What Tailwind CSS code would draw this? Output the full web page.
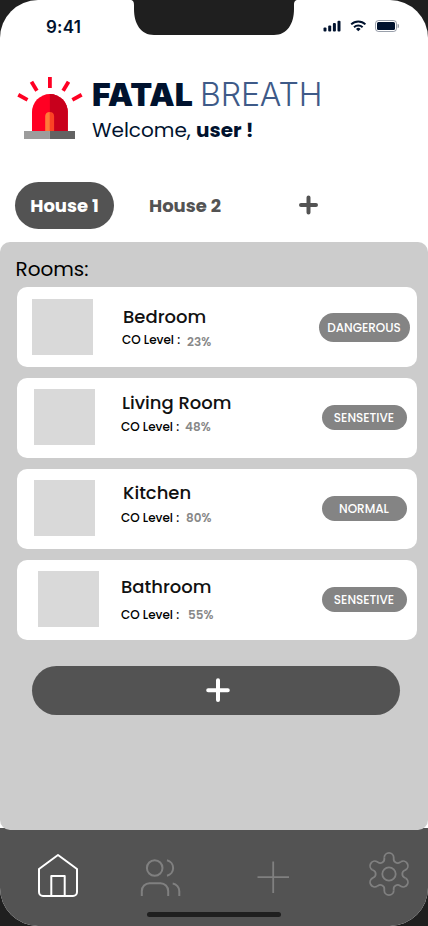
<!DOCTYPE html>
<html lang="en">
<head>
<meta charset="utf-8">
<title>Fatal Breath</title>
<script src="https://cdn.jsdelivr.net/npm/@tailwindcss/browser@4"></script>
</head>
<body class="bg-[#1f1f1f]">
<div class="relative w-[428px] h-[926px] bg-white rounded-[38px] overflow-hidden flex flex-col font-['Poppins','Inter',sans-serif] whitespace-nowrap">
  <svg class="absolute left-[130px] top-0" width="168" height="35" viewBox="0 0 168 35" fill="#1f1f1f"><path d="M0 0C3 0 4 1.500 4 5V9C4 24 11 35 24 35H144C157 35 164 24 164 9V5C164 1.500 165 0 168 0Z"/></svg>
  <header class="h-[44px] shrink-0 flex items-start justify-between pl-[46px] pr-[29px]">
    <span class="mt-[15px] text-[17px] leading-[24px] font-semibold text-[#00122e] font-['Inter'] tracking-[0.2px]">9:41</span>
    <div class="flex items-start mt-[20px] text-[#00122e]">
      <svg width="18" height="12" viewBox="0 0 18 12" fill="currentColor"><rect x="0.500" y="7.500" width="3" height="4" rx="1"/><rect x="5.200" y="5.500" width="3" height="6" rx="1"/><rect x="9.900" y="3" width="3" height="8.500" rx="1"/><rect x="14.500" y="0.700" width="3" height="10.800" rx="1"/></svg>
      <svg class="ml-[9px]" width="17" height="12" viewBox="0 0 17 12" fill="none" stroke="currentColor" stroke-width="2"><path d="M1.200 4.400a10.300 10.300 0 0 1 14.200 0M4 7.300a6.300 6.300 0 0 1 8.600 0"/><path d="M8.300 11.200L6 8.900a3.300 3.300 0 0 1 4.600 0Z" fill="currentColor" stroke="none"/></svg>
      <svg class="ml-[8px]" width="24" height="12" viewBox="0 0 24 12"><rect x=".5" y=".5" width="21" height="11" rx="3" fill="none" stroke="currentColor" stroke-opacity=".4"/><rect x="2" y="2" width="18" height="8" rx="1.500" fill="currentColor"/><path d="M22.600 4v4a2 2 0 0 0 0-4Z" fill="currentColor" opacity=".4"/></svg>
    </div>
  </header>

  <section class="h-[138px] shrink-0 flex pl-[17px] pt-[32px]">
    <svg width="66" height="64" viewBox="0 0 66 64"><g fill="#ff0023"><rect x="31" y="1" width="3.800" height="11"/><rect x="-1.900" y="-5.500" width="3.800" height="10.500" transform="translate(17.300 10.500) rotate(-31)"/><rect x="-1.900" y="-5.500" width="3.800" height="10.500" transform="translate(48.700 10.500) rotate(31)"/><rect x="-1.900" y="-5.300" width="3.800" height="10.600" transform="translate(5.900 21.300) rotate(-61)"/><rect x="-1.900" y="-5.300" width="3.800" height="10.600" transform="translate(60 21.300) rotate(61)"/><path d="M15 55V36a17.900 17.900 0 0 1 35.800 0V55Z"/></g><path d="M32.900 18.100A17.900 17.900 0 0 1 50.800 36V55H32.900Z" fill="#c8001c"/><path d="M28.200 55V40a4.700 4.300 0 0 1 4.700-4V55Z" fill="#ff7a39"/><path d="M32.900 36a4.400 4.300 0 0 1 4.200 4V55H32.900Z" fill="#fb4324"/><path d="M7 55H32.900V63H7Z" fill="#9c9c9c"/><path d="M32.900 55H58V63H32.900Z" fill="#636363"/></svg>
    <div class="ml-[9px]">
      <h1 class="text-[32px] leading-[38px] text-[#00122e] font-['Inter'] flex"><span class="font-black w-[101px]">FATAL</span><span class="font-light text-[#3e5a88] ml-[7px] tracking-[-0.1px]">BREATH</span></h1>
      <p class="text-[20px] leading-[30px] text-[#00122e] mt-[1px]">Welcome, <b>user !</b></p>
    </div>
  </section>

  <nav class="h-[60px] shrink-0 flex items-start pl-[15px] text-[18px] font-bold text-[#535353]">
    <div class="w-[99px] h-[47px] rounded-full bg-[#535353] text-white flex items-center justify-center">House 1</div>
    <div class="h-[47px] flex items-center ml-[35px] w-[150px]">House 2</div>
    <svg class="mt-[13px]" width="20" height="20" viewBox="0 0 20 20" stroke="currentColor" stroke-width="4" stroke-linecap="round"><path d="M9.500 2.500v15M2 10h15"/></svg>
  </nav>

  <main class="relative z-10 h-[588px] shrink-0 bg-[#ccc] rounded-[10px] px-[17px] pt-[12px] flex flex-col">
    <h2 class="-ml-[1.5px] text-[20px] leading-[30px] h-[33px] shrink-0 text-black">Rooms:</h2>
    <div class="flex flex-col gap-[11px] text-[#111] shrink-0">
      <article class="h-[80px] w-[400px] rounded-[10px] bg-white flex items-start">
        <div class="ml-[15px] mt-[12px] w-[61px] h-[56px] bg-[#d9d9d9]"></div>
        <div class="ml-[30px] pt-[18px]">
          <h3 class="text-[18px] leading-[24px] font-medium">Bedroom</h3>
          <p class="-ml-[1px] mt-[3px] text-[12px] leading-[16px] flex font-medium text-black"><span>CO Level :</span><span class="ml-[7px] mt-[2px] font-semibold text-[#888]">23%</span></p>
        </div>
        <div class="ml-auto mr-[7px] mt-[26px] w-[91px] h-[29px] rounded-full bg-[#848484] text-white text-[12px] font-medium flex items-center justify-center pr-[1px]">DANGEROUS</div>
      </article>
      <article class="h-[80px] w-[400px] rounded-[10px] bg-white flex items-start">
        <div class="ml-[17px] mt-[11px] w-[61px] h-[56px] bg-[#d9d9d9]"></div>
        <div class="ml-[26px] pt-[13px]">
          <h3 class="ml-[1px] text-[18px] leading-[24px] font-medium">Living Room</h3>
          <p class="mt-[4px] text-[12px] leading-[16px] flex font-medium text-black"><span>CO Level :</span><span class="ml-[6px] font-semibold text-[#888]">48%</span></p>
        </div>
        <div class="ml-auto mr-[10px] mt-[27px] w-[85px] h-[25px] rounded-full bg-[#848484] text-white text-[12px] font-medium flex items-center justify-center pr-[1px]">SENSETIVE</div>
      </article>
      <article class="h-[80px] w-[400px] rounded-[10px] bg-white flex items-start">
        <div class="ml-[17px] mt-[11px] w-[61px] h-[56px] bg-[#d9d9d9]"></div>
        <div class="ml-[26px] pt-[12px]">
          <h3 class="ml-[2px] text-[18px] leading-[24px] font-medium">Kitchen</h3>
          <p class="mt-[5px] text-[12px] leading-[16px] flex font-medium text-black"><span>CO Level :</span><span class="ml-[7px] font-semibold text-[#888]">80%</span></p>
        </div>
        <div class="ml-auto mr-[10px] mt-[27px] w-[85px] h-[25px] rounded-full bg-[#848484] text-white text-[12px] font-medium flex items-center justify-center pr-[1px]">NORMAL</div>
      </article>
      <article class="h-[80px] w-[400px] rounded-[10px] bg-white flex items-start">
        <div class="ml-[21px] mt-[11px] w-[61px] h-[56px] bg-[#d9d9d9]"></div>
        <div class="ml-[22px] pt-[15px]">
          <h3 class="text-[18px] leading-[24px] font-medium">Bathroom</h3>
          <p class="mt-[8px] text-[12px] leading-[16px] flex font-medium text-black"><span>CO Level :</span><span class="ml-[9px] font-semibold text-[#888]">55%</span></p>
        </div>
        <div class="ml-auto mr-[10px] mt-[27px] w-[85px] h-[25px] rounded-full bg-[#848484] text-white text-[12px] font-medium flex items-center justify-center pr-[1px]">SENSETIVE</div>
      </article>
    </div>
    <button class="ml-[15px] mt-[26px] w-[368px] h-[49px] shrink-0 rounded-full bg-[#535353] text-white flex items-center justify-center"><svg class="mr-[-4px]" width="26" height="26" viewBox="0 0 26 26" stroke="currentColor" stroke-width="4" stroke-linecap="round"><path d="M13 2.300v19.800M3.200 12.200h19.600"/></svg></button>
  </main>

  <footer class="relative -mt-[2px] h-[98px] shrink-0 bg-[#535353] flex items-start text-[#808080]">
    <svg class="ml-[37px] mt-[25px] text-white" width="42" height="46" viewBox="0 0 42 46" fill="none" stroke="currentColor" stroke-width="2" stroke-linejoin="round"><path d="M2 16L21 2l19 14v23a4 4 0 0 1-4 4H6a4 4 0 0 1-4-4Z"/><path d="M14.300 43V23h13.400v20"/></svg>
    <svg class="ml-[61px] mt-[30px]" width="42" height="40" viewBox="0 0 42 40" fill="none" stroke="currentColor" stroke-width="2"><circle cx="14.700" cy="10" r="7.800"/><path d="M27 2.300a7.900 7.900 0 0 1 0 15.400M1.800 38v-5a7.700 7.700 0 0 1 7.700-7.700h11a7.700 7.700 0 0 1 7.700 7.700v5M32.700 25.600a7.700 7.700 0 0 1 6.600 7.600v4.800"/></svg>
    <svg class="ml-[74px] mt-[33px]" width="34" height="34" viewBox="0 0 34 34" fill="none" stroke="currentColor" stroke-width="1.800"><path d="M17.200 .500v31.500M1.500 16.200h31.500"/></svg>
    <svg class="ml-[78px] mt-[23px]" width="42" height="46" viewBox="-21 -23 42 46" fill="none" stroke="currentColor" stroke-width="1.800"><circle r="6.700"/><path id="tooth" d="M-4.700 -16.400A4.700 4.700 0 0 1 4.700 -16.400V-15.600A4 4 0 0 0 11.160 -11.870L11.850 -12.270"/><use href="#tooth" transform="rotate(60)"/><use href="#tooth" transform="rotate(120)"/><use href="#tooth" transform="rotate(180)"/><use href="#tooth" transform="rotate(240)"/><use href="#tooth" transform="rotate(300)"/></svg>
    <div class="absolute left-[147px] top-[84px] w-[134px] h-[5px] rounded-full bg-[#1f1f1f]"></div>
  </footer>
</div>
</body>
</html>
